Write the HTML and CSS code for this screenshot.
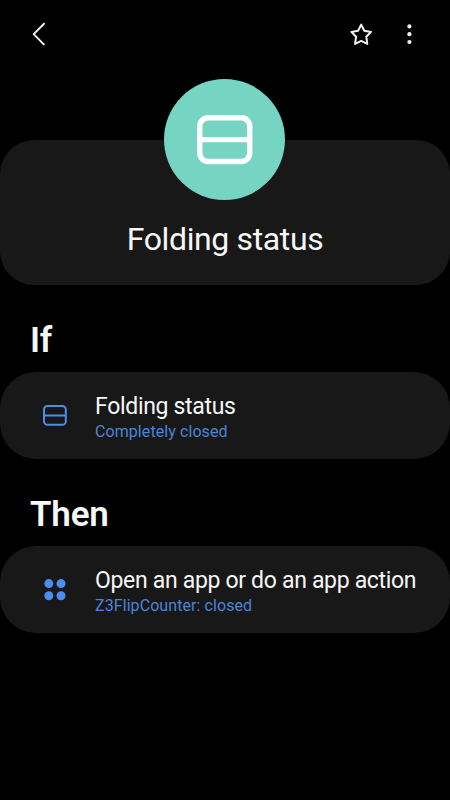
FILE: index.html
```html
<!DOCTYPE html>
<html lang="en">
<head>
<meta charset="utf-8">
<title>Folding status</title>
<link rel="stylesheet" href="styles.css">
</head>
<body>
<header class="toolbar">
  <svg class="back" width="20" height="30" viewBox="0 0 20 30" fill="none"><path d="M15 4.8 4.7 15.1 14.8 25.4"/></svg>
  <svg class="star" width="28" height="28" viewBox="0 0 28 28" fill="none"><path d="M14.2 4.6 17.3 10.8 24 11.9 19.3 16.7 20.3 23.9 14.2 20.9 8.1 23.9 9.1 16.7 4.4 11.9 11.1 10.8Z"/></svg>
  <svg class="more" width="8" height="28" viewBox="0 0 8 28"><circle cx="4.4" cy="6.4" r="2.1"/><circle cx="4.4" cy="14.2" r="2.1"/><circle cx="4.4" cy="22" r="2.1"/></svg>
</header>
<main>
  <section class="hero">
    <div class="badge">
      <svg width="56" height="50" viewBox="0 0 56 50" fill="none"><rect x="2.75" y="2.75" width="50" height="43.8" rx="8.5"/><path d="M3 24.6H53"/></svg>
    </div>
    <h1>Folding status</h1>
  </section>
  <h2>If</h2>
  <section class="card">
    <svg class="fold" width="24" height="22" viewBox="0 0 24 22" fill="none"><rect x="1" y="1" width="21.8" height="18.8" rx="3.6"/><path d="M1 10.5H23"/></svg>
    <div class="text">
      <h3>Folding status</h3>
      <p>Completely closed</p>
    </div>
  </section>
  <h2>Then</h2>
  <section class="card">
    <svg class="dots" width="24" height="22" viewBox="0 0 24 22"><circle cx="5.8" cy="4.6" r="4.5"/><circle cx="18" cy="4.6" r="4.5"/><circle cx="5.8" cy="16.8" r="4.5"/><circle cx="18" cy="16.8" r="4.5"/></svg>
    <div class="text">
      <h3>Open an app or do an app action</h3>
      <p>Z3FlipCounter: closed</p>
    </div>
  </section>
</main>
</body>
</html>
```
FILE: styles.css
```css
* { box-sizing: border-box; margin: 0; padding: 0; }
body {
  height: 800px;
  background: #000;
  color: #f7f7f7;
  font-family: Roboto, "Liberation Sans", sans-serif;
  overflow: hidden;
}
svg { display: block; flex: none; overflow: visible; }
.toolbar {
  height: 68px;
  padding: 0 37px 0 29px;
  display: flex;
  align-items: center;
}
.back path, .star path {
  stroke: #f2f2f2;
  stroke-width: 2;
  stroke-linecap: round;
  stroke-linejoin: round;
}
.star { margin-left: auto; margin-right: 30px; }
.more { fill: #f2f2f2; }
.hero {
  margin-top: 72px;
  height: 145px;
  border-radius: 34px;
  background: #181818;
  display: flex;
  flex-direction: column;
  align-items: center;
}
.badge {
  width: 121px;
  height: 121px;
  margin: -61px 1px 0 0;
  border-radius: 50%;
  background: #76d5c2;
  display: flex;
  align-items: center;
  justify-content: center;
  flex: none;
}
.badge svg { stroke: #fff; stroke-width: 5.4; }
h1 {
  margin-top: 19px;
  font-size: 32px;
  line-height: 40px;
  font-weight: 400;
  letter-spacing: -0.37px;
}
h2 {
  height: 87px;
  padding: 36px 0 0 30px;
  font-size: 35px;
  line-height: 40px;
  font-weight: 600;
  letter-spacing: -0.2px;
}
.card {
  height: 87px;
  padding-left: 43px;
  border-radius: 36px;
  background: #181818;
  display: flex;
  align-items: center;
}
.fold { stroke: #4b8df0; stroke-width: 2; }
.dots { fill: #4b8df0; }
.text { margin-left: 28px; padding-top: 6px; white-space: nowrap; }
h3 { font-size: 23px; line-height: 28px; font-weight: 400; letter-spacing: -0.32px; }
p { margin-top: -1px; font-size: 16px; line-height: 24px; color: #4b85da; letter-spacing: 0.08px; }
```
